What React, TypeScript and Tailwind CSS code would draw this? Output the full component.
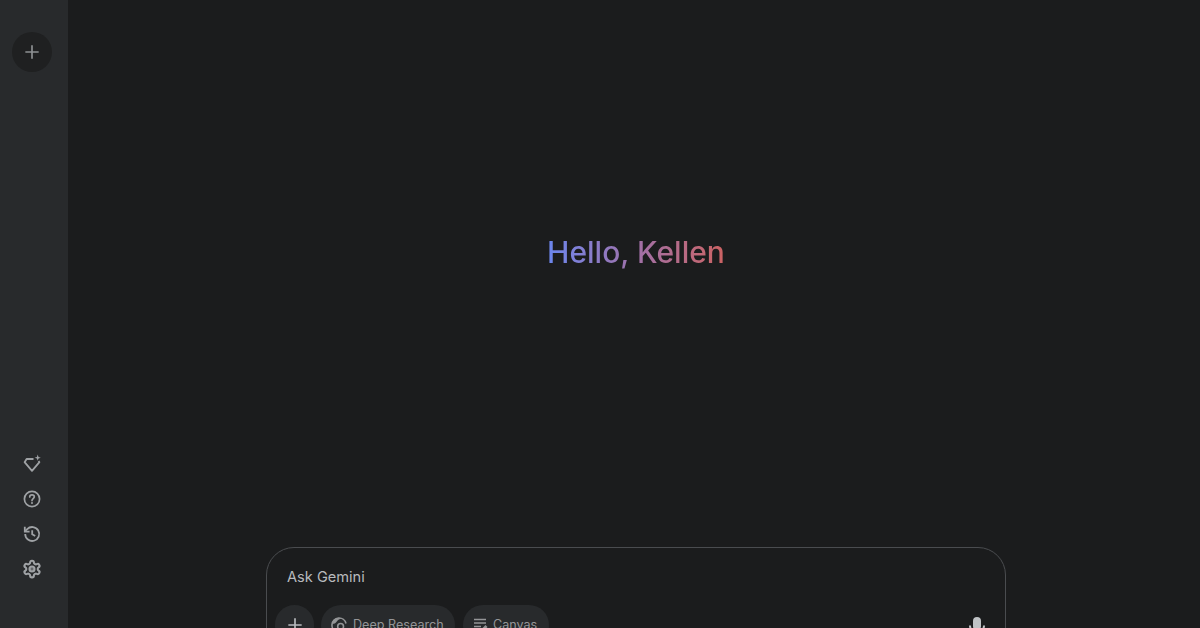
import React from "react";

function Plus({ size }: { size: number }) {
  return (
    <svg width={size} height={size} viewBox="0 0 24 24" fill="none" stroke="currentColor" strokeWidth="2">
      <path d="M12 4v16M4 12h16" />
    </svg>
  );
}

function GemIcon() {
  return (
    <svg width="20" height="20" viewBox="0 0 20 20" fill="none" stroke="currentColor" strokeWidth="1.8" strokeLinejoin="round">
      <path d="M11.500 5H4.600L2.600 8.200 10 16.800l7.400-8.600-.8-1.200" />
      <path d="M15.700 .6l.8 2.300 2.300.8-2.300.8-.8 2.300-.8-2.300-2.300-.8 2.300-.8z" fill="currentColor" stroke="none" />
    </svg>
  );
}

function HelpIcon() {
  return (
    <svg width="20" height="20" viewBox="0 0 20 20" fill="none" stroke="currentColor" strokeWidth="1.7">
      <circle cx="10" cy="10" r="7.6" />
      <path d="M7.700 8c0-1.400 1-2.200 2.300-2.200s2.300.8 2.300 2c0 1.900-2.300 1.800-2.300 3.800" strokeLinecap="round" />
      <circle cx="10" cy="14" r="1" fill="currentColor" stroke="none" />
    </svg>
  );
}

function HistoryIcon() {
  return (
    <svg width="20" height="20" viewBox="0 0 20 20" fill="none" stroke="currentColor" strokeWidth="1.8">
      <path d="M3.200 10a7 7 0 1 0 2-4.900L3 7.300" />
      <path d="M2.800 2.800v4.800h4.800" />
      <path d="M10.200 6.200v4l3 1.900" />
    </svg>
  );
}

function GearIcon() {
  return (
    <svg width="20" height="20" viewBox="0 0 24 24" fill="none" stroke="currentColor" strokeWidth="2.500" strokeLinejoin="round">
      <path d="M12.220 2h-.44a2 2 0 0 0-2 2v.18a2 2 0 0 1-1 1.730l-.43.250a2 2 0 0 1-2 0l-.15-.08a2 2 0 0 0-2.730.730l-.22.380a2 2 0 0 0 .730 2.730l.15.100a2 2 0 0 1 1 1.720v.510a2 2 0 0 1-1 1.740l-.15.090a2 2 0 0 0-.730 2.730l.22.380a2 2 0 0 0 2.730.730l.15-.08a2 2 0 0 1 2 0l.43.250a2 2 0 0 1 1 1.730V20a2 2 0 0 0 2 2h.44a2 2 0 0 0 2-2v-.18a2 2 0 0 1 1-1.730l.43-.25a2 2 0 0 1 2 0l.15.080a2 2 0 0 0 2.730-.730l.22-.39a2 2 0 0 0-.730-2.730l-.15-.08a2 2 0 0 1-1-1.740v-.5a2 2 0 0 1 1-1.740l.15-.09a2 2 0 0 0 .730-2.730l-.22-.38a2 2 0 0 0-2.730-.730l-.15.080a2 2 0 0 1-2 0l-.43-.25a2 2 0 0 1-1-1.730V4a2 2 0 0 0-2-2z" />
      <circle cx="12" cy="12" r="3" fill="currentColor" fillOpacity="0.5" />
    </svg>
  );
}

function ResearchIcon() {
  return (
    <svg width="16" height="16" viewBox="0 0 16 16" fill="none" stroke="currentColor" strokeWidth="1.6">
      <path d="M6.500 15A7.100 7.100 0 1 1 15 6.500" />
      <path d="M1 6.800C3.200 7 5 6 6 4.200 7 2.700 8.500 2 10.500 1.500 8.800 .7 6.500 .6 4.600 1.600 2.500 2.800 1.300 4.600 1 6.800z" fill="currentColor" stroke="none" />
      <circle cx="9.600" cy="9.400" r="2.900" />
      <path d="M11.800 11.500l3 3" />
    </svg>
  );
}

function CanvasIcon() {
  return (
    <svg width="16" height="16" viewBox="0 0 16 16" fill="none" stroke="currentColor" strokeWidth="1.5">
      <path d="M1 2.500h12M1 6h12M1 9.500h7M1 13h5" />
      <path d="M8.500 14v-2l4-4 2 2-4 4z" fill="currentColor" stroke="none" />
    </svg>
  );
}

function MicIcon() {
  return (
    <svg width="24" height="24" viewBox="0 0 24 24" fill="none" stroke="currentColor" strokeWidth="2">
      <rect x="8" y="2" width="8" height="13" rx="4" fill="currentColor" stroke="none" />
      <path d="M5 10.500c0 4 3 7 7 7s7-3 7-7M12 17.500V22" />
    </svg>
  );
}

function SideItem({ children }: { children: React.ReactNode }) {
  return <div className="h-[35px] flex items-center justify-center text-[#9fa2a5]">{children}</div>;
}

export default function App() {
  return (
    <div className="w-[1200px] h-[628px] overflow-hidden flex bg-[#1b1c1d] [font-family:'Inter','Noto_Sans',sans-serif]">
      <aside className="w-[68px] shrink-0 h-full bg-[#282a2c] flex flex-col items-center pt-[32px] pb-[42px] pr-1">
        <div className="w-10 h-10 rounded-full bg-[#1f2021] flex items-center justify-center text-[#8d9093]">
          <Plus size={20} />
        </div>
        <div className="mt-auto w-full flex flex-col">
          <SideItem><GemIcon /></SideItem>
          <SideItem><HelpIcon /></SideItem>
          <SideItem><HistoryIcon /></SideItem>
          <SideItem><GearIcon /></SideItem>
        </div>
      </aside>
      <main className="flex-1 flex flex-col items-center min-w-0 pl-1">
        <div className="h-[547px] shrink-0 w-full flex justify-center pt-[231px]">
          <h1 className="h-[42px] leading-[42px] text-[30px] font-medium text-transparent bg-clip-text bg-gradient-to-r from-[#6a86ee] via-[#a070a8] to-[#cc6262]">
            Hello, Kellen
          </h1>
        </div>
        <div className="w-[740px] h-[120px] shrink-0 rounded-[28px] border border-[#4a4c4f] px-2">
          <div className="pl-3 pt-[19px] h-[57px] text-[14.600px] leading-5 text-[#b8babd]">Ask Gemini</div>
          <div className="flex items-center">
            <div className="w-[39px] h-10 rounded-full bg-[#282a2c] flex items-center justify-center text-[#b8bbbe]">
              <Plus size={20} />
            </div>
            <div className="flex gap-[8px] ml-[7px] text-[12.600px] text-[#949597]">
              <div className="h-10 w-[134px] rounded-full bg-[#282a2c] flex items-center pl-[10px] gap-[6px]">
                <ResearchIcon />
                <span>Deep Research</span>
              </div>
              <div className="h-10 w-[86px] rounded-full bg-[#282a2c] flex items-center pl-[10px] gap-[4px]">
                <CanvasIcon />
                <span>Canvas</span>
              </div>
            </div>
            <div className="ml-auto mr-[8px] mt-1 text-[#c0c3c6]">
              <MicIcon />
            </div>
          </div>
        </div>
      </main>
    </div>
  );
}
